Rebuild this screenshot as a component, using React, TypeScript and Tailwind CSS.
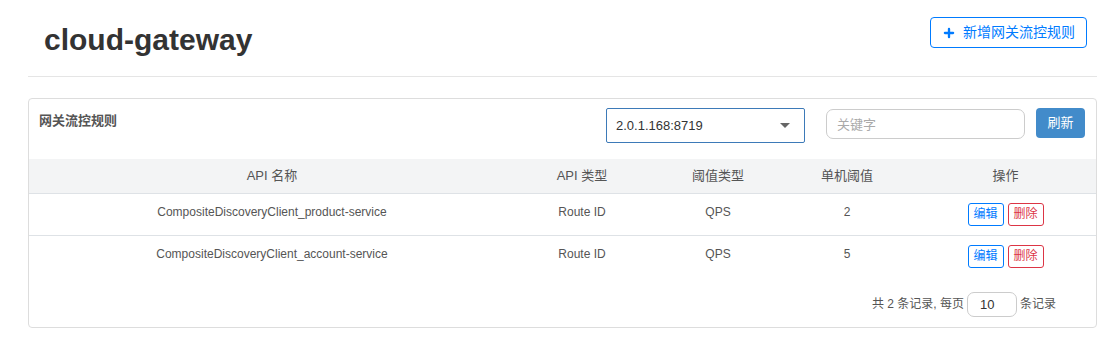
import { Plus } from 'lucide-react'

const rows = [
  { name: 'CompositeDiscoveryClient_product-service', type: 'Route ID', grade: 'QPS', count: '2' },
  { name: 'CompositeDiscoveryClient_account-service', type: 'Route ID', grade: 'QPS', count: '5' },
]

const font = "font-['Liberation_Sans','Noto_Sans_CJK_SC',sans-serif]"

export default function App() {
  return (
    <div className={`${font} ml-[28px] mr-[13px] bg-white text-[#333]`}>
      {/* Header */}
      <div className="flex h-[77px] items-start justify-between border-b border-[#e5e5e5] pl-[16px] pr-[10px]">
        <h1 className="mt-[20px] text-[30px] font-bold leading-[40px] text-[#333]">cloud-gateway</h1>
        <button className="mt-[17px] flex h-[31px] w-[157px] items-center justify-center gap-[7px] rounded-[4px] border border-[#007bff] text-[14px] text-[#007bff]">
          <Plus size={14} strokeWidth={4} />
          新增网关流控规则
        </button>
      </div>

      {/* Card */}
      <div className="mt-[21px] rounded-[4px] border border-[#ddd]">
        <div className="flex h-[60px] items-start pl-[10px] pr-[11px] pt-[9px]">
          <div className="mt-[3px] flex-1 text-[13px] font-bold text-[#555]">网关流控规则</div>
          <div className="flex h-[35px] w-[199px] items-center justify-between rounded-[2px] border border-[#3d7ab8] pl-[9px] pr-[14px] text-[13px] text-[#333]">
            <span>2.0.1.168:8719</span>
            <span className="h-0 w-0 border-x-[5px] border-t-[5px] border-x-transparent border-t-[#666]" />
          </div>
          <input
            placeholder="关键字"
            className="ml-[21px] mt-[1px] h-[30px] w-[199px] rounded-[7px] border border-[#ccc] px-[10px] text-[13px] outline-none placeholder:text-[#aaa]"
          />
          <button className="ml-[11px] h-[30px] w-[49px] rounded-[4px] bg-[#428bca] text-[13px] text-white">刷新</button>
        </div>

        <table className="w-full table-fixed border-collapse text-center">
          <colgroup>
            <col className="w-[486px]" />
            <col className="w-[134px]" />
            <col className="w-[138px]" />
            <col className="w-[120px]" />
            <col />
          </colgroup>
          <thead>
            <tr className="h-[34px] border-b border-[#dee2e6] bg-[#f3f4f5] text-[13px] font-normal text-[#555]">
              <th className="font-normal">API 名称</th>
              <th className="font-normal">API 类型</th>
              <th className="font-normal">阈值类型</th>
              <th className="font-normal">单机阈值</th>
              <th className="pl-[8px] font-normal">操作</th>
            </tr>
          </thead>
          <tbody>
            {rows.map((r) => (
              <tr key={r.name} className="h-[42px] border-b border-[#dee2e6] align-top text-[12px] text-[#555] last:border-b-0">
                <td className="pt-[9px]">{r.name}</td>
                <td className="pt-[9px]">{r.type}</td>
                <td className="pt-[9px]">{r.grade}</td>
                <td className="pt-[9px]">{r.count}</td>
                <td className="pl-[8px] pt-[9px]">
                  <div className="flex justify-center gap-[4px]">
                    <button className="h-[23px] w-[36px] rounded-[3px] border border-[#007bff] text-[12px] text-[#007bff]">编辑</button>
                    <button className="h-[23px] w-[36px] rounded-[3px] border border-[#dc3545] text-[12px] text-[#dc3545]">删除</button>
                  </div>
                </td>
              </tr>
            ))}
          </tbody>
        </table>

        <div className="flex h-[50px] items-center justify-end pr-[40px] pt-[4px] text-[12px] text-[#555]">
          <span>共 2 条记录, 每页</span>
          <input
            defaultValue="10"
            className="mx-[3px] h-[25px] w-[50px] rounded-[7px] border border-[#ccc] px-[12px] text-[13px] text-[#333] outline-none"
          />
          <span>条记录</span>
        </div>
      </div>
    </div>
  )
}
